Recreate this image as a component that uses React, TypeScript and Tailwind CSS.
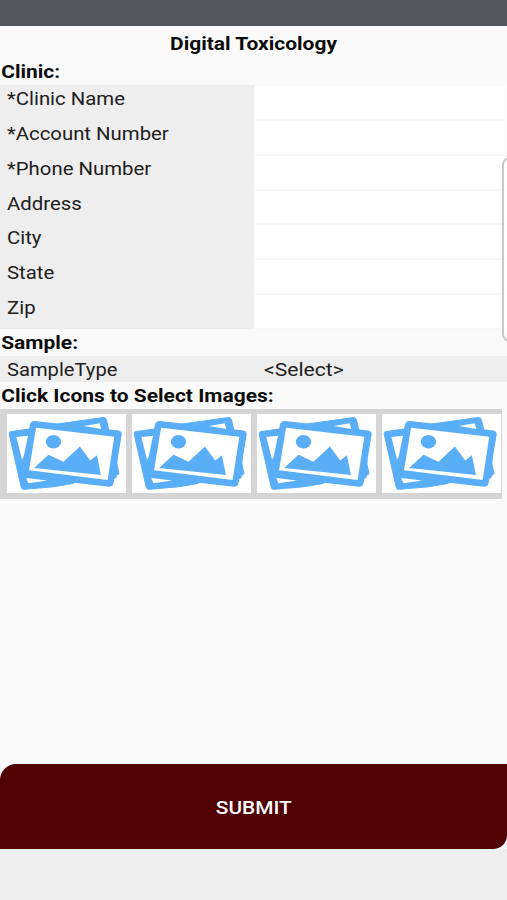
import React, { useState } from 'react';

interface Field {
  id: string;
  label: string;
}

const FIELDS: Field[] = [
  { id: 'clinic', label: '*Clinic Name' },
  { id: 'account', label: '*Account Number' },
  { id: 'phone', label: '*Phone Number' },
  { id: 'address', label: 'Address' },
  { id: 'city', label: 'City' },
  { id: 'state', label: 'State' },
  { id: 'zip', label: 'Zip' },
];

const SLOTS = [0, 1, 2, 3];

const PicturesIcon: React.FC = () => (
  <svg viewBox="0 0 356 236" preserveAspectRatio="none" className="block w-full h-full" fill="#5aaef8">
    {/* back frames */}
    <g stroke="#5aaef8" strokeWidth="3" strokeLinejoin="round">
      <path d="M72 44 L13 52 Q5 54 7 62 L42 216 Q44 226 53 225 L140 217 L196 208 L220 190 L90 192 Z" />
      <path d="M118 34 L283 11 Q295 9 298 20 L306 54 L180 46 Z" />
      <path d="M329 132 L329 150 L335 178 L327 184 L326 190 L312 196 Z" />
    </g>
    <path d="M28 69 L63 65 L50 127 L45 136 Z" fill="#fff" />
    {/* front frame */}
    <path
      d="M84 23 L333 51 Q342 53 341 62 L317 206 Q315 216 305 215 L58 187 Q49 185 50 177 L70 34 Q73 22 84 23 Z"
      stroke="#5aaef8"
      strokeWidth="4"
    />
    <path d="M58 191 L120 199 L64 207 Z" fill="#fff" />
    <path d="M230 36 L277 28 L282 45 Z" fill="#fff" />
    <path d="M87 41 L321 68 L301 197 L66 168 Z" fill="#fff" />
    <ellipse cx="139" cy="83" rx="23" ry="20" />
    <path d="M81 161 L124 122 L169 143 L218 97 L249 139 L269 123 L281 182 Z" />
  </svg>
);

const Heading: React.FC<{ children: React.ReactNode }> = ({ children }) => (
  <h2 className="h-[26px] pl-px text-[18px] font-bold leading-[28px] whitespace-nowrap origin-left scale-x-[1.165]">{children}</h2>
);

const App: React.FC = () => {
  const [values, setValues] = useState<Record<string, string>>({});

  return (
    <div className="relative flex h-[900px] w-[507px] flex-col overflow-hidden bg-[#fafafa] font-['Roboto',sans-serif] text-[#0c0c0c]">
      <div className="h-[26px] shrink-0 bg-[#54575c]" />

      <h1 className="h-8 text-center text-[18px] font-bold leading-[35px] scale-x-[1.165]">Digital Toxicology</h1>
      <Heading>Clinic:</Heading>

      <div className="mt-[1px] flex h-[244px] flex-col">
        {FIELDS.map((field) => (
          <label key={field.id} className="flex flex-1">
            <span className="w-[254px] bg-[#eeeeee] pl-[7px]">
              <span className="block w-fit origin-left scale-x-[1.13] text-[18px] leading-[28px] whitespace-nowrap text-[#202020]">
                {field.label}
              </span>
            </span>
            <input
              type="text"
              value={values[field.id] ?? ''}
              onChange={(e) => setValues((prev) => ({ ...prev, [field.id]: e.target.value }))}
              className="mt-px mr-px -mb-px ml-px min-w-0 flex-1 border-b-2 border-[#f8f8f8] bg-white px-2 outline-none"
            />
          </label>
        ))}
      </div>

      <Heading>Sample:</Heading>
      <div className="mt-px flex h-[26px] bg-[#eeeeee] text-[#202020]">
        <span className="w-[256px] pl-[7px]">
          <span className="block w-fit origin-left scale-x-[1.12] text-[18px] leading-[27px]">SampleType</span>
        </span>
        <button className="flex-1 pl-[8px] text-left">
          <span className="block w-fit origin-left scale-x-[1.11] text-[19px] leading-[27px]">&lt;Select&gt;</span>
        </button>
      </div>
      <Heading>Click Icons to Select Images:</Heading>

      <div className="mt-[1px] flex h-[90px] w-[502px] shrink-0 gap-[6px] bg-[#d4d5d4] pt-[5px] pr-px pb-[6px] pl-[7px]">
        {SLOTS.map((slot) => (
          <button key={slot} className="flex-1 bg-white">
            <PicturesIcon />
          </button>
        ))}
      </div>

      <button className="mt-auto h-[85px] shrink-0 rounded-tl-[16px] rounded-br-[14px] bg-[#500000] pt-px text-[18px] font-medium text-white">
        <span className="inline-block scale-x-[1.16]">SUBMIT</span>
      </button>
      <div className="h-[51px] shrink-0 bg-[#efefef]" />

      {/* edge panel handle */}
      <div className="absolute top-[157px] left-[502px] h-[185px] w-3 rounded-l-lg border-2 border-[#c8c8c8] bg-white/60" />
    </div>
  );
};

export default App;
